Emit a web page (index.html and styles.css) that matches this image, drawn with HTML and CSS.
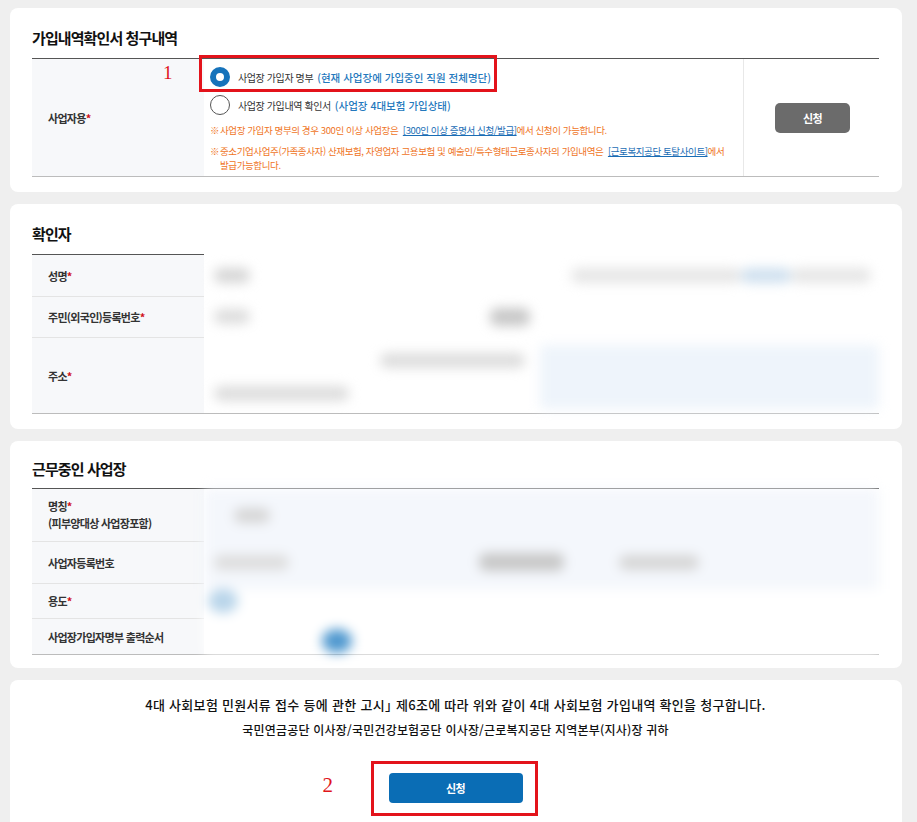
FILE: index.html
```html
<!DOCTYPE html>
<html lang="ko">
<head>
<meta charset="utf-8">
<title>가입내역확인서 청구</title>
<link rel="stylesheet" href="styles.css">
</head>
<body>
<main class="page">
  <section class="card">
    <h2 class="card-title">가입내역확인서 청구내역</h2>
    <div class="form-table t1">
      <div class="label">
        <span>사업자용<em>*</em></span>
        <span class="anno anno-1">1</span>
      </div>
      <div class="value options">
        <span class="redbox redbox-1"></span>
        <div class="opt"><span class="radio on"></span><span class="opt-text">사업장 가입자 명부</span><span class="opt-desc">(현재 사업장에 가입중인 직원 전체명단)</span></div>
        <div class="opt"><span class="radio"></span><span class="opt-text">사업장 가입내역 확인서</span><span class="opt-desc">(사업장 4대보험 가입상태)</span></div>
        <p class="note"><span class="mark">※</span><span>사업장 가입자 명부의 경우 300인 이상 사업장은 &nbsp;<a class="link">[300인 이상 증명서 신청/발급]</a>에서 신청이 가능합니다.</span></p>
        <p class="note"><span class="mark">※</span><span>중소기업사업주(가족종사자) 산재보험, 자영업자 고용보험 및 예술인/특수형태근로종사자의 가입내역은 &nbsp;<a class="link">[근로복지공단 토탈사이트]</a>에서<br>발급가능합니다.</span></p>
      </div>
      <div class="action"><button class="btn btn-gray" type="button">신청</button></div>
    </div>
  </section>

  <section class="card">
    <h2 class="card-title">확인자</h2>
    <div class="form-table t2">
      <div class="label first r1">성명<em>*</em></div>
      <div class="label r2">주민(외국인)등록번호<em>*</em></div>
      <div class="label r3">주소<em>*</em></div>
      <div class="blur-block">
        <div class="brow">
          <span class="b w36 g1"></span>
          <span class="spread"></span>
          <span class="b w170 g3"></span><span class="b w50 bl1"></span><span class="b w80 g3"></span>
        </div>
        <div class="brow">
          <span class="b w36 g2"></span>
          <span class="b w40 g0 ml240"></span>
        </div>
        <div class="brow brow-addr">
          <div class="addr-left">
            <span class="b w145 g2 ml170"></span>
            <span class="b w135 g2"></span>
          </div>
          <div class="addr-box"></div>
        </div>
      </div>
    </div>
  </section>

  <section class="card card-work">
    <h2 class="card-title">근무중인 사업장</h2>
    <div class="form-table t3">
      <div class="label first r1 two">
        <span>명칭<em>*</em></span>
        <span>(피부양대상 사업장포함)</span>
      </div>
      <div class="label r2">사업자등록번호</div>
      <div class="label r3">용도<em>*</em></div>
      <div class="label r4">사업장가입자명부 출력순서</div>
      <div class="blur-block tint">
        <div class="brow"><span class="b w36 g1 ml20"></span></div>
        <div class="brow">
          <span class="b w75 g2"></span>
          <span class="b w85 g0 ml190"></span>
          <span class="b w80 g1 ml55"></span>
        </div>
        <div class="brow plain"><span class="dot dot-l"></span></div>
        <div class="brow plain"><span class="dot dot-b"></span></div>
      </div>
    </div>
  </section>

  <section class="card card-submit">
    <p class="decl">4대 사회보험 민원서류 접수 등에 관한 고시<span class="cjk-close">」</span> 제6조에 따라 위와 같이 4대 사회보험 가입내역 확인을 청구합니다.</p>
    <p class="addressee">국민연금공단 이사장/국민건강보험공단 이사장/근로복지공단 지역본부(지사)장 귀하</p>
    <div class="submit-row">
      <div class="submit-wrap">
        <span class="anno anno-2">2</span>
        <span class="redbox redbox-2"></span>
        <button class="btn btn-blue" type="button">신청</button>
      </div>
    </div>
  </section>
</main>
</body>
</html>
```

FILE: styles.css
```css
* { box-sizing: border-box; }

body {
  margin: 0;
  background: #efefef;
  font-family: "Noto Sans CJK KR", "Noto Sans", sans-serif;
  color: #222;
}

.page {
  padding: 8px 15px 0 10px;
  display: flex;
  flex-direction: column;
  gap: 12px;
}

.card {
  background: #fff;
  border-radius: 8px;
  padding: 20px 23px 15px 22px;
}

.card-work {
  padding-top: 18px;
  padding-bottom: 13px;
}

.card-work .card-title { margin-bottom: 9px; }

.card-title {
  margin: 0 0 10px;
  font-size: 15px;
  line-height: 20px;
  font-weight: 700;
  letter-spacing: -0.9px;
  color: #111;
}

.form-table {
  display: grid;
  border-bottom: 1px solid #bcbcbc;
}

.t1 {
  grid-template-columns: 172px 1fr 135px;
  border-top: 1px solid #555;
}

.t2 {
  grid-template-columns: 172px 1fr;
  grid-template-rows: 42px 41px 76px;
}

.t3 {
  grid-template-columns: 172px 1fr;
  grid-template-rows: 52px 42px 35px 36px;
  border-top: 1px solid #555;
}

.label {
  position: relative;
  background: #f7f8fa;
  display: flex;
  align-items: center;
  padding-left: 16px;
  font-size: 11px;
  font-weight: 700;
  color: #333;
  letter-spacing: -0.7px;
  border-top: 1px solid #e4e4e4;
  grid-column: 1;
}

.t1 .label { border-top: 0; }
.t2 .label.first { border-top: 1px solid #555; }
.t3 .label.first { border-top: 0; }

.label.two {
  flex-direction: column;
  align-items: flex-start;
  justify-content: center;
  line-height: 17px;
}

.label em {
  color: #d0111b;
  font-style: normal;
}

.r1 { grid-row: 1; }
.r2 { grid-row: 2; }
.r3 { grid-row: 3; }
.r4 { grid-row: 4; }

/* annotations */
.anno {
  position: absolute;
  font-family: "Liberation Serif", serif;
  color: #e0151b;
  font-weight: 400;
  letter-spacing: 0;
}

.anno-1 {
  left: 131px;
  top: 3px;
  font-size: 19px;
}

.redbox {
  position: absolute;
  border: 3px solid #e3131b;
  pointer-events: none;
}

.redbox-1 {
  left: -5px;
  top: -4px;
  width: 298px;
  height: 37px;
}

/* options cell */
.value { position: relative; }

.options {
  padding: 8px 0 4px 6px;
  border-right: 1px solid #e8e8e8;
}

.opt {
  display: flex;
  align-items: center;
  height: 20px;
  margin-bottom: 8px;
  font-size: 10px;
  letter-spacing: -0.4px;
}

.radio {
  width: 20px;
  height: 20px;
  border-radius: 50%;
  border: 1px solid #555;
  background: #fff;
  margin-right: 8px;
  flex: none;
}

.radio.on {
  border: 6px solid #1673bb;
}

.opt-text { color: #333; margin-right: 4px; }

.opt-desc {
  color: #2478bd;
  font-weight: 500;
  font-size: 10.5px;
  letter-spacing: 0;
}

.note {
  display: flex;
  margin: 0 0 7px;
  font-size: 9.5px;
  line-height: 14px;
  color: #ef7526;
  letter-spacing: -0.4px;
}

.note:last-child { margin-bottom: 0; }

.note .mark {
  width: 10px;
  flex: none;
  letter-spacing: 0;
}

.link {
  color: #1a6db5;
  text-decoration: underline;
}

.action {
  display: flex;
  align-items: center;
  justify-content: center;
}

.btn {
  border: 0;
  color: #fff;
  font-family: inherit;
  font-size: 11px;
  font-weight: 700;
  letter-spacing: -0.5px;
}

.btn-gray {
  width: 75px;
  height: 30px;
  border-radius: 5px;
  background: #6b6b6b;
  margin-left: 2px;
}

/* blurred (masked) values */
.blur-block {
  grid-column: 2;
  grid-row: 1 / -1;
  display: grid;
  filter: blur(6px);
}

.t2 .blur-block { grid-template-rows: 42px 41px 76px; }
.t3 .blur-block {
  grid-template-rows: 52px 42px 35px 36px;
  background: linear-gradient(#f4f7fc 0, #f4f7fc 100px, #fff 100px);
}

.brow {
  display: flex;
  align-items: center;
  padding: 0 8px 0 10px;
}

.spread { flex: 1; }

.b {
  display: block;
  height: 15px;
  border-radius: 7px;
  flex: none;
}

.w36 { width: 36px; }
.w40 { width: 40px; height: 18px; }
.w50 { width: 50px; }
.w75 { width: 75px; }
.w80 { width: 80px; }
.w85 { width: 85px; height: 18px; }
.w135 { width: 135px; }
.w145 { width: 145px; }
.w170 { width: 170px; }

.ml20 { margin-left: 20px; }
.ml55 { margin-left: 55px; }
.ml170 { margin-left: 166px; }
.ml190 { margin-left: 190px; }
.ml240 { margin-left: 240px; }

.g0 { background: #c8c8c8; }
.g1 { background: #d6d6d6; }
.g2 { background: #dddddd; }
.g3 { background: #e6e6e6; }
.bl1 { background: #cfe0ef; }

.brow-addr {
  align-items: stretch;
  padding: 8px 0 4px 10px;
}

.addr-left {
  width: 326px;
  display: flex;
  flex-direction: column;
  justify-content: space-between;
  padding: 8px 0 8px;
}

.addr-box {
  flex: 1;
  background: #eef4fb;
  border-radius: 4px;
}

.brow.plain { padding-left: 0; }

.dot {
  display: block;
  width: 30px;
  height: 24px;
  border-radius: 50%;
}

.dot-l { background: #b9d5ea; margin-left: 4px; }
.dot-b { background: #4f98cf; margin-left: 118px; margin-top: 10px; }

/* submit card */
.card-submit {
  padding: 16px 23px 30px 22px;
  text-align: center;
}

.decl {
  margin: 0;
  font-size: 13px;
  line-height: 18px;
  font-weight: 500;
  letter-spacing: 0.3px;
  color: #111;
}

.cjk-close {
  letter-spacing: -6px;
}

.addressee {
  margin: 7px 0 0;
  font-size: 12px;
  line-height: 17px;
  font-weight: 500;
  letter-spacing: 0.2px;
  color: #111;
}

.submit-row {
  display: flex;
  justify-content: center;
  margin-top: 35px;
}

.submit-wrap {
  position: relative;
}

.btn-blue {
  display: block;
  width: 134px;
  height: 30px;
  border-radius: 4px;
  background: #0a6db5;
}

.redbox-2 {
  left: -18px;
  top: -12px;
  width: 167px;
  height: 55px;
}

.anno-2 {
  left: -66px;
  top: 0;
  font-size: 21px;
}
```
